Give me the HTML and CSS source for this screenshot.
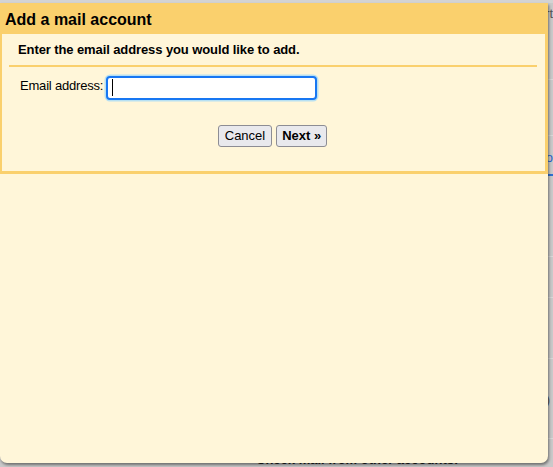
FILE: index.html
```html
<!DOCTYPE html>
<html lang="en">
<head>
<meta charset="utf-8">
<title>Add a mail account</title>
<link rel="stylesheet" href="styles.css">
</head>
<body>
<div class="page">
  <div class="prow prow-1"><span class="ptext">Accounts and Import</span></div>
  <div class="prow prow-2"></div>
  <div class="prow prow-3"><span class="plink">edit info</span></div>
  <div class="prow prow-4"></div>
  <div class="prow prow-5"></div>
  <div class="prow prow-6"></div>
  <div class="prow prow-7"><span class="ptext">(Learn more)</span></div>
  <div class="prow prow-8"><span class="pbold">Check mail from other accounts:</span></div>
</div>

<div class="window">
  <div class="dialog">
    <div class="header">Add a mail account</div>
    <div class="content">
      <div class="prompt">Enter the email address you would like to add.</div>
      <div class="separator"></div>
      <div class="field">
        <label class="label" for="email">Email address:</label>
        <input class="input" id="email" type="text" autofocus>
      </div>
      <div class="actions">
        <button class="btn" type="button">Cancel</button>
        <button class="btn btn-primary" type="button">Next &raquo;</button>
      </div>
    </div>
  </div>
</div>
</body>
</html>
```

FILE: styles.css
```css
html, body {
  margin: 0;
  padding: 0;
}

body {
  width: 553px;
  height: 467px;
  overflow: hidden;
  position: relative;
  font-family: "Liberation Sans", Arial, sans-serif;
  background: #c9c9c9;
}

/* page behind the popup */
.page {
  height: 467px;
  display: flex;
  flex-direction: column;
  background: #c9c9c9;
  color: #444;
  font-size: 13px;
}

.prow {
  box-sizing: border-box;
  border-bottom: 1px solid #d8d8d8;
  display: flex;
  justify-content: flex-end;
}

.prow-1 { height: 80px; padding-top: 3px; border-top: 3px solid #d3d3d3; }
.prow-2 { height: 57px; }
.prow-3 { height: 40px; border-bottom: 2px solid #2f6fd0; align-items: center; padding-top: 4px; }
.prow-4 { height: 81px; }
.prow-5 { height: 41px; }
.prow-6 { height: 62px; }
.prow-7 { height: 80px; padding-top: 33px; padding-right: 3px; }
.prow-8 { border-bottom: 0; flex: 1; justify-content: flex-start; padding: 13px 0 0 256px; }

.ptext { color: #555; line-height: 15px; }
.plink { color: #2a62c9; line-height: 15px; }
.pbold { color: #222; font-weight: bold; line-height: 15px; white-space: nowrap; }

/* popup window */
.window {
  position: absolute;
  left: 0;
  top: 3px;
  width: 548px;
  height: 460px;
  background: #fff6d9;
  border-radius: 0 0 7px 7px;
  box-shadow: 1px 2px 3px rgba(0, 0, 0, 0.45);
  color: #000;
}

.dialog {
  border: 3px solid #fad06d;
  border-left-width: 2px;
  border-top: 0;
}

.header {
  box-sizing: border-box;
  height: 31px;
  padding: 8px 0 0 3px;
  background: #fad06d;
  font-size: 16px;
  line-height: 18px;
  font-weight: bold;
}

.content {
  padding: 8px 8px 24px 7px;
}

.prompt {
  padding: 0 9px;
  font-size: 13px;
  line-height: 16px;
  font-weight: bold;
  letter-spacing: -0.1px;
  margin-bottom: 7px;
}

.separator {
  height: 2px;
  background: #fad06d;
}

.field {
  display: flex;
  align-items: flex-start;
  padding: 9px 0 0 11px;
}

.label {
  padding-top: 2px;
  margin-right: 3px;
  font-size: 13px;
  line-height: 15px;
  letter-spacing: -0.2px;
}

.input {
  box-sizing: border-box;
  width: 211px;
  height: 24px;
  margin: 0;
  padding: 0 6px;
  border: 2px solid #1877f2;
  border-radius: 4px;
  background: #fff linear-gradient(#000, #000) no-repeat 4px 1px / 1px 17px;
  box-shadow: 0 0 0 1.5px #b7e0f2;
  outline: none;
  caret-color: transparent;
  font-family: "Liberation Sans", Arial, sans-serif;
  font-size: 14px;
}

.actions {
  display: flex;
  justify-content: center;
  gap: 4px;
  margin-top: 25px;
  padding-right: 1px;
}

.btn {
  box-sizing: border-box;
  height: 22px;
  margin: 0;
  padding: 0 6px;
  border: 1px solid #8d8d94;
  border-radius: 3px;
  background: #e9e9ed;
  color: #000;
  font-family: "Liberation Sans", Arial, sans-serif;
  font-size: 13px;
  line-height: 18px;
}

.btn-primary {
  font-weight: bold;
  padding: 0 5px;
}
```
